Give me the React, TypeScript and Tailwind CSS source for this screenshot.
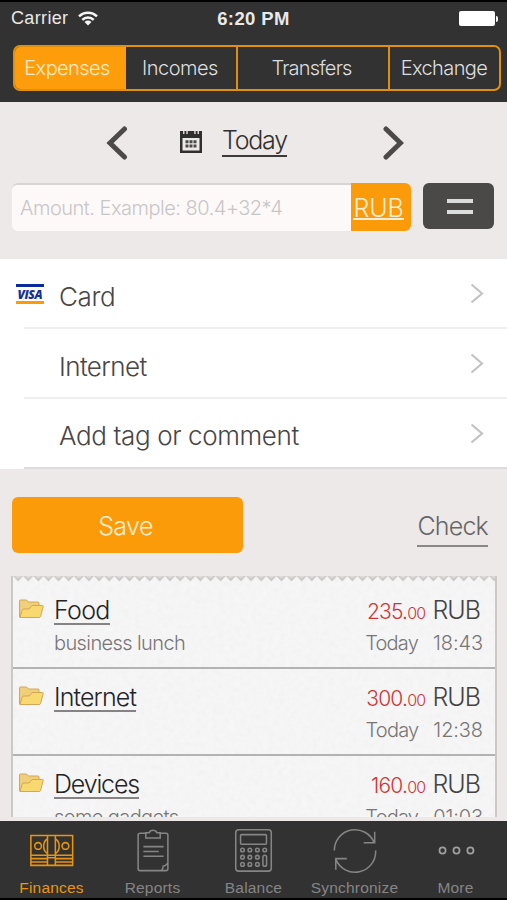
import clsx from "clsx"

type Operation = {
  category: string
  note: string
  whole: string
  time: string
  categoryClass: string
}

const SEGMENTS = [
  { label: "Expenses", className: "w-[111px] bg-[#fd9d0c] pr-[7px] tracking-[-0.6px] text-[#fdebc8]" },
  { label: "Incomes", className: "w-[110px] pr-[2px] tracking-[-0.5px] text-[#dedede]" },
  { label: "Transfers", className: "w-[152px] border-l-2 border-[#df900f] pr-[3px] tracking-[-0.8px] text-[#dedede]" },
  { label: "Exchange", className: "w-[111px] border-l-2 border-[#df900f] pr-px tracking-[-0.6px] text-[#dedede]" },
]

const OPERATIONS: Operation[] = [
  { category: "Food", note: "business lunch", whole: "235", time: "18:43", categoryClass: "tracking-[-0.7px]" },
  { category: "Internet", note: "", whole: "300", time: "12:38", categoryClass: "tracking-[-0.85px]" },
  { category: "Devices", note: "some gadgets", whole: "160", time: "01:03", categoryClass: "tracking-[-1.15px]" },
]

const TABS = [
  { label: "Finances", icon: MoneyIcon },
  { label: "Reports", icon: ClipboardIcon },
  { label: "Balance", icon: CalculatorIcon },
  { label: "Synchronize", icon: SyncIcon },
  { label: "More", icon: MoreIcon },
]

export default function App() {
  return (
    <div className="flex h-[900px] w-[507px] flex-col overflow-hidden border-t-2 border-b-2 border-black bg-[#ece9e8] font-['Inter','Liberation_Sans',sans-serif] font-light">
      <header className="h-[100px] shrink-0 bg-[#323232]">
        <StatusBar />
        <SegmentedControl />
      </header>
      <DatePicker />
      <AmountRow />
      <section className="mt-[28px] h-[210px] shrink-0 bg-white">
        <DetailRow label="Card" icon={<VisaIcon />} textClass="tracking-[-0.35px]" />
        <DetailRow label="Internet" textClass="tracking-[-0.6px]" />
        <DetailRow label="Add tag or comment" textClass="tracking-[-0.38px]" last />
      </section>
      <div className="flex h-[107px] shrink-0 items-start justify-between pt-[28px] pr-[19px] pl-3">
        <button className="h-[56px] w-[231px] rounded-md bg-[#fb9b0a] pt-[3px] pr-1 text-[25px] tracking-[-0.6px] text-[#fdeed5]">
          Save
        </button>
        <a className="mt-[12px] h-[38px] border-b-2 border-[#8b8786] text-[25px] leading-[34px] tracking-[-0.8px] text-[#686565]">Check</a>
      </div>
      <Receipt />
      <TabBar />
    </div>
  )
}

function StatusBar() {
  return (
    <div className="flex h-[33px] items-center justify-between pr-[9px] pl-[11px] text-[18px] text-[#e9e9e9]">
      <div className="flex w-[108px] items-center gap-[10px] font-['Liberation_Sans',sans-serif] font-normal tracking-[0.35px]">
        Carrier
        <svg width="20" height="15" viewBox="0 0 20 15" fill="none" stroke="#f5f5f5" strokeWidth="2.5">
          <path d="M1 5.4a12.7 12.7 0 0 1 18 0" />
          <path d="M4.3 8.8a8 8 0 0 1 11.4 0" />
          <path d="M10 14.6 6.5 11a5 5 0 0 1 7 0z" fill="#f5f5f5" stroke="none" />
        </svg>
      </div>
      <div className="font-['Liberation_Sans',sans-serif] text-[18.5px] font-bold tracking-[0.4px]">6:20 PM</div>
      <div className="flex w-[110px] items-center justify-end gap-px">
        <div className="h-[15px] w-[36px] rounded-[2px] bg-white" />
        <div className="h-[6px] w-[2px] rounded-r-full bg-white" />
      </div>
    </div>
  )
}

function SegmentedControl() {
  return (
    <div className="mt-[10px] ml-[13px] flex h-[46px] w-[488px] overflow-hidden rounded-[7px] border-2 border-[#df900f]">
      {SEGMENTS.map((segment) => (
        <button key={segment.label} className={clsx("shrink-0 text-[20px]", segment.className)}>
          {segment.label}
        </button>
      ))}
    </div>
  )
}

function DatePicker() {
  return (
    <div className="flex h-[81px] shrink-0 items-center pl-[106px]">
      <svg width="22" height="36" viewBox="0 0 22 36" fill="none" stroke="#4c4949" strokeWidth="5" strokeLinecap="round">
        <path d="M18.5 4 4 18l14.5 14" />
      </svg>
      <svg className="mb-[2px] ml-[52px]" width="22" height="24" viewBox="0 0 22 24">
        <path d="M0 1h22v22H0zM2.500 8v12.500h17V8z" fill="#312e2e" fillRule="evenodd" />
        <path d="M3 1h1.500v3H3zM6.300 1h1.500v3H6.300zM14.200 1h1.500v3h-1.500zM17.500 1H19v3h-1.500z" fill="#d9d6d5" />
        <path d="M5.500 10.200h3v3h-3zM9.500 10.200h3v3h-3zM13.500 10.200h3v3h-3zM5.500 14.500h3v3h-3zM9.500 14.500h3v3h-3zM13.500 14.500h3v3h-3z" fill="#4c4949" />
      </svg>
      <span className="mb-[5px] ml-5 h-[34px] border-b-2 border-[#3c3939] text-[25px] leading-[34px] tracking-[-1.250px] text-[#333030]">Today</span>
      <svg className="ml-[95px]" width="22" height="36" viewBox="0 0 22 36" fill="none" stroke="#4c4949" strokeWidth="5" strokeLinecap="round">
        <path d="M4 4l14.500 14L4 32" />
      </svg>
    </div>
  )
}

function AmountRow() {
  return (
    <div className="flex h-[48px] shrink-0 items-start pl-3">
      <div className="flex h-[48px] w-[339px] items-center rounded-l-md border-t-2 border-[#d8d4d3] bg-[#fdf9f9] pl-2 text-[20px] tracking-[-0.5px] text-[#c9c6c6]">
        Amount. Example: 80.4+32*4
      </div>
      <button className="flex h-[48px] w-[60px] justify-center rounded-r-md bg-[#fb9b0a] pt-[10px] pr-[5px]">
        <span className="h-[27px] border-b-2 border-[#fdeed5] text-[25px] leading-[30px] tracking-[-0.1px] text-[#fdeed5]">RUB</span>
      </button>
      <button className="ml-3 flex h-[46px] w-[71px] flex-col items-center justify-center gap-[7px] rounded-md bg-[#4b4948] pl-[2px]">
        <div className="h-1 w-[26px] bg-[#dddcdc]" />
        <div className="h-1 w-[26px] bg-[#dddcdc]" />
      </button>
    </div>
  )
}

function DetailRow({ label, icon, textClass, last }: { label: string; icon?: React.ReactNode; textClass: string; last?: boolean }) {
  return (
    <div className="flex h-[70px]">
      <div className="w-6 pt-[24px] pl-4">{icon}</div>
      <div className={clsx("flex flex-1 justify-between border-b-2 pr-[23px] pl-[35px]", last ? "border-[#dddbdb]" : "border-[#efefef]")}>
        <span className={clsx("text-[26px] leading-[38px] text-[#484646]", last ? "pt-[18px]" : "pt-[19px]", textClass)}>{label}</span>
        <svg className="mt-[24px]" width="14" height="21" viewBox="0 0 14 21" fill="none" stroke="#c3c3c3" strokeWidth="2.200">
          <path d="M1.500 1.500 12 10.500 1.500 19.500" />
        </svg>
      </div>
    </div>
  )
}

function Receipt() {
  return (
    <div className="flex-1 overflow-hidden px-[11px] pb-1">
      <div className="relative h-full w-[486px] overflow-hidden border-x-2 border-[#cbc8c8] bg-[#f7f7f7]">
        {/* paper grain */}
        <svg className="absolute inset-0 opacity-[0.07]" width="482" height="242">
          <filter id="grain">
            <feTurbulence type="fractalNoise" baseFrequency="0.18" numOctaves="3" seed="4" />
            <feColorMatrix type="saturate" values="0" />
          </filter>
          <rect width="482" height="242" filter="url(#grain)" />
        </svg>
        <svg className="relative block" width="482" height="6">
          <defs>
            <pattern id="teeth" width="10.130" height="6" patternUnits="userSpaceOnUse">
              <path d="M0 0h10.130L5.060 5.500z" fill="#cbc8c7" />
              <path d="M1.500 0h7L5.060 2.500z" fill="#dedbda" />
            </pattern>
          </defs>
          <rect width="482" height="6" fill="url(#teeth)" />
        </svg>
        {OPERATIONS.map((op) => (
          <OperationRow key={op.category} op={op} />
        ))}
      </div>
    </div>
  )
}

function OperationRow({ op }: { op: Operation }) {
  return (
    <div className="relative flex h-[87px] justify-between border-b-2 border-[#b4b3b3] pr-[12px] pl-[5px]">
      <div className="flex">
        <FolderIcon />
        <div className="ml-[9px] flex flex-col items-start pt-[13px]">
          <span className={clsx("h-[30px] border-b-2 border-[#858383] text-[25px] leading-[31px] text-[#252424]", op.categoryClass)}>{op.category}</span>
          <span className="mt-[5px] text-[20px] leading-[26px] tracking-[-0.6px] text-[#777575]">{op.note}</span>
        </div>
      </div>
      <div className="flex flex-col items-end pt-[13px]">
        <div className="flex items-baseline pr-[3px] leading-[31px]">
          <span className="text-[21px] tracking-[-0.8px] text-[#cf3437]">{op.whole}.</span>
          <span className="text-[16px] tracking-[-0.7px] text-[#cf3437]">00</span>
          <span className="ml-[7px] text-[25px] tracking-[-1px] text-[#454343]">RUB</span>
        </div>
        <div className="mt-px flex gap-[15px] text-[20px] leading-[26px] text-[#777575]">
          <span className="tracking-[-0.8px]">Today</span>
          <span className="tracking-[-0.1px]">{op.time}</span>
        </div>
      </div>
    </div>
  )
}

function TabBar() {
  return (
    <nav className="flex h-[77px] shrink-0 bg-[#323232] pl-px">
      {TABS.map(({ label, icon: TabIcon }, i) => (
        <button
          key={label}
          className={clsx(
            "flex w-[101px] shrink-0 flex-col items-center pt-[5px] font-['Liberation_Sans',sans-serif] text-[15.5px] leading-[20px] font-normal tracking-[0.2px]",
            i === 0 ? "text-[#e9950f]" : "text-[#858585]",
          )}
        >
          <TabIcon />
          <span className="mt-[4px]">{label}</span>
        </button>
      ))}
    </nav>
  )
}

function VisaIcon() {
  return (
    <svg width="28" height="22" viewBox="0 0 28 22">
      <path d="M0 1h28v3H0z" fill="#0b2a9b" />
      <path d="M0 18h28v3H0z" fill="#fb9b0a" />
      <text x="1.500" y="15.500" textLength="25" fontSize="12" fontWeight="800" fontStyle="italic" fontFamily="Open Sans" fill="#14309c">VISA</text>
    </svg>
  )
}

function FolderIcon() {
  return (
    <svg className="mt-[16px]" width="27" height="22" viewBox="0 0 27 22" stroke="#d3a558" strokeWidth="1" strokeLinejoin="round">
      <path d="M1.500 19V3q0-1 1-1h6l2 2H20q1 0 1 1V17z" fill="#f0cf78" />
      <path d="M2 19.500 4 12.500q.4-1.500 1.800-1.500H11l3-3.500h10.500q1 0 .7 1L22.500 18.500q-.4 1-1.400 1z" fill="#f8d970" />
    </svg>
  )
}

function MoneyIcon() {
  return (
    <svg width="50" height="50" viewBox="0 0 50 50" fill="none" stroke="#e9950f" strokeWidth="1.600">
      <path d="M3 10h43.500v31H3zM3 30.500H46.500M3 34h17.300M28.500 34H46.500M3 37.500h17.300M28.500 37.500H46.500M20.300 10v31M28.500 10v31M20.300 33H28.500" />
      <circle cx="10.500" cy="20.800" r="3.500" />
      <circle cx="39" cy="20.800" r="3.500" />
      <path d="M20.300 13.500q-4 2-4 7.500t4 7.500M28.500 13.500q4 2 4 7.500t-4 7.500" />
    </svg>
  )
}

function ClipboardIcon() {
  return (
    <svg width="50" height="50" viewBox="0 0 50 50" fill="none" stroke="#858585" strokeWidth="1.600">
      <path d="M18 7.500h-6.500q-2 0-2 2v35q0 2 2 2h27q2 0 2-2v-35q0-2-2-2H32M34 46q1.500-1 1.500-4 3-.5 4.500-3" />
      <path d="M17.500 7h3.500q1-2.500 4-2.500T29 7h3.500v5.500h-15zM15 21.500h21M15 26.500h16M15 31.500h21" />
    </svg>
  )
}

function CalculatorIcon() {
  return (
    <svg width="50" height="50" viewBox="0 0 50 50" fill="none" stroke="#858585" strokeWidth="1.600">
      <rect x="6" y="4" width="37" height="43" rx="3" />
      <rect x="11" y="9" width="27" height="10" rx="1" />
      <circle cx="13" cy="25" r="1.900" />
      <circle cx="20.700" cy="25" r="1.900" />
      <circle cx="28.500" cy="25" r="1.900" />
      <circle cx="36.200" cy="25" r="1.900" />
      <circle cx="13" cy="32.500" r="1.900" />
      <circle cx="20.700" cy="32.500" r="1.900" />
      <circle cx="28.500" cy="32.500" r="1.900" />
      <circle cx="13" cy="40" r="1.900" />
      <circle cx="20.700" cy="40" r="1.900" />
      <circle cx="28.500" cy="40" r="1.900" />
      <rect x="34.300" y="30.500" width="3.800" height="11.500" rx="1.900" />
    </svg>
  )
}

function SyncIcon() {
  return (
    <svg width="50" height="50" viewBox="0 0 50 50" fill="none" stroke="#858585" strokeWidth="1.600">
      <path d="M3.500 25.500a21.500 21.500 0 0 1 41.500-8M45.500 6v11.500H34" />
      <path d="M46.500 25.500a21.500 21.500 0 0 1-41.500 9M5 45.500V34h11.500" />
    </svg>
  )
}

function MoreIcon() {
  return (
    <svg width="50" height="50" viewBox="0 0 50 50" fill="none" stroke="#a0a0a0" strokeWidth="1.800">
      <circle cx="11" cy="25.500" r="3.200" />
      <circle cx="25.500" cy="25.500" r="3.200" />
      <circle cx="40" cy="25.500" r="3.200" />
    </svg>
  )
}
